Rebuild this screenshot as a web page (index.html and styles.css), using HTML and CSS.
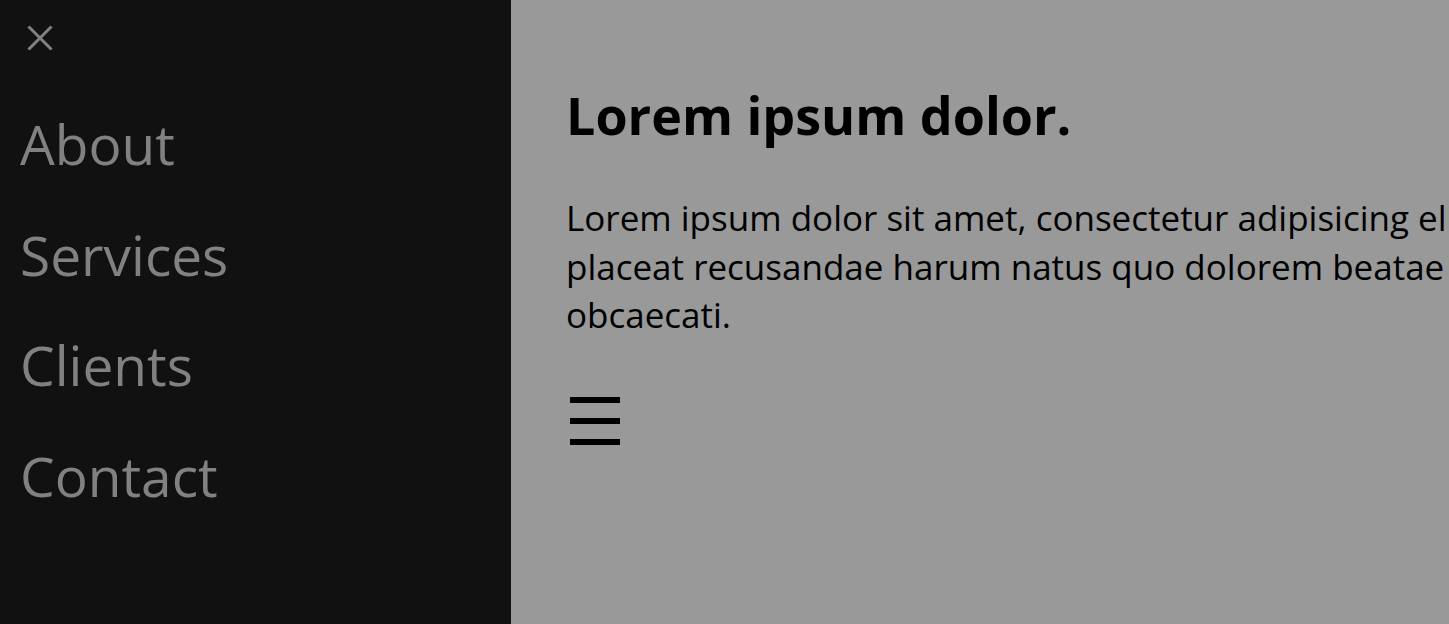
FILE: index.html
```html
<!DOCTYPE html>
<html lang="en">
<head>
<meta charset="utf-8">
<title>Sidenav</title>
<link rel="stylesheet" href="styles.css">
</head>
<body>
<nav class="sidenav">
  <a class="closebtn" href="#" aria-label="Close">
    <svg width="26" height="26" viewBox="0 0 26 26"><path d="M1.5 1.5 L24.5 24.5 M24.5 1.5 L1.5 24.5" stroke="#818181" stroke-width="3" fill="none"/></svg>
  </a>
  <a class="navlink" href="#">About</a>
  <a class="navlink" href="#">Services</a>
  <a class="navlink" href="#">Clients</a>
  <a class="navlink" href="#">Contact</a>
</nav>
<main class="main">
  <h2 class="title">Lorem ipsum dolor.</h2>
  <p class="text"><span class="line">Lorem ipsum dolor sit amet, consectetur adipisicing elit. Aliquid, quos,</span><span class="line">placeat recusandae harum natus quo dolorem beatae minima nesciunt</span><span class="line">obcaecati.</span></p>
  <span class="menu-icon" aria-label="Open menu">
    <svg width="50" height="50" viewBox="0 0 50 50"><rect x="0" y="0" width="50" height="6" fill="#000"/><rect x="0" y="21" width="50" height="6" fill="#000"/><rect x="0" y="42" width="50" height="6" fill="#000"/></svg>
  </span>
</main>
</body>
</html>
```

FILE: styles.css
```css
html, body {
  margin: 0;
  padding: 0;
  height: 100%;
  overflow: hidden;
}
body {
  display: flex;
  font-family: "Open Sans", "Noto Sans CJK KR", sans-serif;
  background: #999999;
}
.sidenav {
  flex: 0 0 511px;
  height: 100%;
  background: #111111;
  display: flex;
  flex-direction: column;
  padding-top: 25px;
  box-sizing: border-box;
}
.closebtn {
  display: block;
  margin-left: 27px;
  width: 26px;
  height: 26px;
  line-height: 0;
}
.navlink {
  display: block;
  padding-left: 20px;
  color: #818181;
  text-decoration: none;
  font-size: 55px;
  line-height: 110.5px;
}
.closebtn + .navlink {
  margin-top: 38px;
}
.main {
  flex: 0 0 1200px;
  padding-left: 55px;
  color: #000;
}
.title {
  margin: 80px 0 0;
  font-size: 52px;
  font-weight: 700;
  line-height: 70px;
}
.text {
  margin: 44px 0 0;
  font-size: 35px;
  line-height: 48.5px;
}
.line {
  display: block;
  white-space: nowrap;
}
.menu-icon {
  display: block;
  margin-top: 57px;
  margin-left: 4px;
  width: 50px;
  height: 50px;
  line-height: 0;
}
```
